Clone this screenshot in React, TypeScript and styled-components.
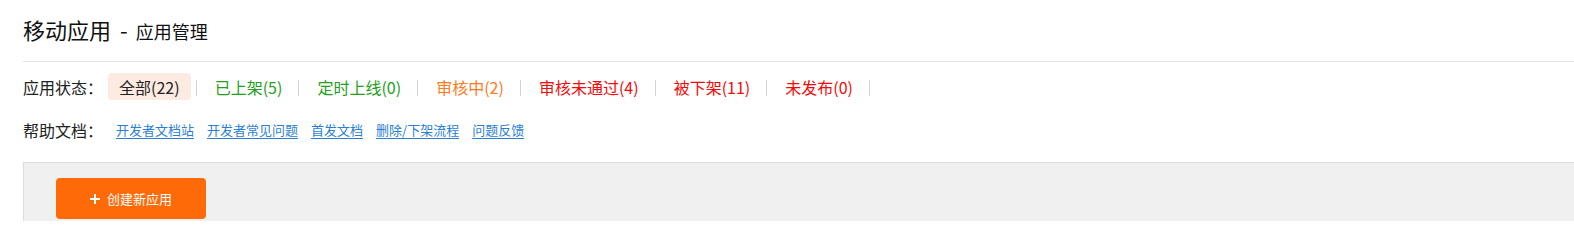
import React from 'react';
import styled, { createGlobalStyle } from 'styled-components';

type Tone = 'default' | 'green' | 'orange' | 'red';

const statusList: { label: string; count: number; tone: Tone; active?: boolean }[] = [
  { label: '全部', count: 22, tone: 'default', active: true },
  { label: '已上架', count: 5, tone: 'green' },
  { label: '定时上线', count: 0, tone: 'green' },
  { label: '审核中', count: 2, tone: 'orange' },
  { label: '审核未通过', count: 4, tone: 'red' },
  { label: '被下架', count: 11, tone: 'red' },
  { label: '未发布', count: 0, tone: 'red' },
];

const helpLinks = ['开发者文档站', '开发者常见问题', '首发文档', '删除/下架流程', '问题反馈'];

const toneColor: Record<Tone, string> = {
  default: '#222',
  green: '#24a01c',
  orange: '#ff7a1c',
  red: '#f40a0a',
};

const App: React.FC = () => {
  return (
    <>
      <GlobalStyle />
      <Page>
        <Header>
          <Title>
            移动应用<Dash>-</Dash>
            <SubTitle>应用管理</SubTitle>
          </Title>
        </Header>

        <FilterRow>
          <RowLabel>应用状态：</RowLabel>
          {statusList.map((s) => (
            <React.Fragment key={s.label}>
              <StatusItem $tone={s.tone} $active={s.active}>
                {s.label}({s.count})
              </StatusItem>
              <Separator />
            </React.Fragment>
          ))}
        </FilterRow>

        <HelpRow>
          <RowLabel>帮助文档：</RowLabel>
          <HelpLinks>
            {helpLinks.map((l) => (
              <HelpLink key={l} href="#">
                {l}
              </HelpLink>
            ))}
          </HelpLinks>
        </HelpRow>

        <Panel>
          <CreateButton>
            <PlusIcon viewBox="0 0 10 10">
              <path d="M4 0h2v4h4v2H6v4H4V6H0V4h4z" fill="#fff" />
            </PlusIcon>
            创建新应用
          </CreateButton>
        </Panel>
      </Page>
    </>
  );
};

const GlobalStyle = createGlobalStyle`
  html, body {
    margin: 0;
    padding: 0;
    background: #fff;
    font-family: "Noto Sans CJK SC", "Noto Sans", sans-serif;
    color: #222;
  }
`;

const Page = styled.div`
  padding-left: 23px;
  height: 221px;
  overflow: hidden;
`;

const Header = styled.div`
  height: 61px;
  display: flex;
  align-items: center;
  border-bottom: 1px solid #e3e3e3;
`;

const Title = styled.h1`
  display: flex;
  align-items: baseline;
  margin: 0;
  margin-top: -2px;
  font-size: 22px;
  font-weight: 400;
  color: #111;
  line-height: 30px;
`;

const Dash = styled.span`
  margin: 0 8px 0 9px;
`;

const SubTitle = styled.span`
  font-size: 18px;
`;

const FilterRow = styled.div`
  display: flex;
  align-items: center;
  height: 27px;
  margin-top: 11px;
`;

const RowLabel = styled.span`
  font-size: 16px;
  line-height: 20px;
  color: #222;
  margin-right: 5px;
`;

const StatusItem = styled.span<{ $tone: Tone; $active?: boolean }>`
  display: inline-flex;
  align-items: center;
  height: 27px;
  padding: 0 11px;
  border-radius: 4px;
  font-size: 16px;
  color: ${({ $tone }) => toneColor[$tone]};
  background: ${({ $active }) => ($active ? '#fdebe2' : 'transparent')};
  cursor: pointer;
`;

const Separator = styled.span`
  width: 1px;
  height: 16px;
  margin: 2px 7px 0 5px;
  background: #cfd3da;
`;

const HelpRow = styled.div`
  display: flex;
  align-items: center;
  height: 20px;
  margin-top: 20px;
`;

const HelpLinks = styled.div`
  display: flex;
  gap: 13px;
  margin-left: 8px;
`;

const HelpLink = styled.a`
  font-size: 13px;
  line-height: 18px;
  color: #2a7fd4;
  text-decoration: underline;
  text-underline-offset: 3px;
`;

const Panel = styled.div`
  margin-top: 22px;
  background: #f0f0f0;
  border-top: 1px solid #dcdcdc;
  border-left: 1px solid #dcdcdc;
  padding: 15px 0 0 32px;
  height: 100px;
`;

const CreateButton = styled.button`
  width: 150px;
  height: 41px;
  border: none;
  border-radius: 4px;
  background: #ff6a08;
  color: #fff;
  font-family: "Noto Sans CJK SC", "Noto Sans", sans-serif;
  font-size: 13px;
  display: flex;
  align-items: center;
  justify-content: center;
  gap: 7px;
  cursor: pointer;
`;

const PlusIcon = styled.svg`
  width: 10px;
  height: 10px;
`;

export default App;
